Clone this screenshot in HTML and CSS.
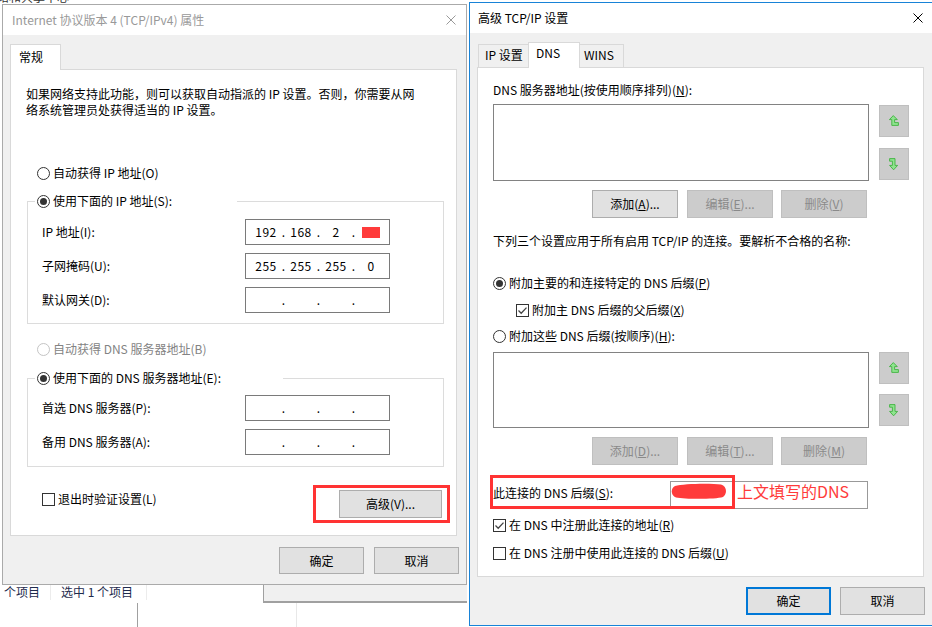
FILE: index.html
```html
<!DOCTYPE html>
<html lang="zh-CN">
<head>
<meta charset="utf-8">
<title>TCP/IPv4 属性</title>
<link rel="stylesheet" href="styles.css">
</head>
<body>
<div class="explorer">
  <div class="explorer-top"><span class="crumb">络和共享中心</span></div>
  <div class="statusbar">
    <div class="status-left">
      <span class="status-item s1">个项目</span>
      <span class="status-item s2">选中 1 个项目</span>
    </div>
    <div class="status-gray"></div>
  </div>
  <div class="explorer-bottom">
    <div class="col c1"></div>
    <div class="col c2"></div>
  </div>
</div>

<section class="win win-left">
  <header class="titlebar inactive">
    <span class="title">Internet 协议版本 4 (TCP/IPv4) 属性</span>
    <svg class="close" width="10" height="10" viewBox="0 0 10 10"><path d="M0.5 0.5L9.5 9.5M9.5 0.5L0.5 9.5"/></svg>
  </header>
  <nav class="tabs tabs-left"><div class="tab selected t-general">常规</div></nav>
  <div class="panel panel-left">
    <p class="intro">如果网络支持此功能，则可以获取自动指派的 IP 设置。否则，你需要从网<br>络系统管理员处获得适当的 IP 设置。</p>
    <div class="radio r-auto-ip"><span class="circle"></span>自动获得 IP 地址(O)</div>
    <div class="group g-ip">
      <div class="legend lg-ip"><div class="radio"><span class="circle on"></span>使用下面的 IP 地址(S):</div></div>
      <div class="field-row first">
        <span class="field-label">IP 地址(I):</span>
        <div class="ipbox"><span class="seg">192</span><span class="dot">.</span><span class="seg">168</span><span class="dot">.</span><span class="seg">2</span><span class="dot">.</span><span class="seg"><span class="redact"></span></span></div>
      </div>
      <div class="field-row">
        <span class="field-label">子网掩码(U):</span>
        <div class="ipbox"><span class="seg">255</span><span class="dot">.</span><span class="seg">255</span><span class="dot">.</span><span class="seg">255</span><span class="dot">.</span><span class="seg">0</span></div>
      </div>
      <div class="field-row">
        <span class="field-label">默认网关(D):</span>
        <div class="ipbox"><span class="seg"></span><span class="dot">.</span><span class="seg"></span><span class="dot">.</span><span class="seg"></span><span class="dot">.</span><span class="seg"></span></div>
      </div>
    </div>
    <div class="radio disabled r-auto-dns"><span class="circle"></span>自动获得 DNS 服务器地址(B)</div>
    <div class="group g-dns">
      <div class="legend lg-dns"><div class="radio"><span class="circle on"></span>使用下面的 DNS 服务器地址(E):</div></div>
      <div class="field-row first">
        <span class="field-label">首选 DNS 服务器(P):</span>
        <div class="ipbox"><span class="seg"></span><span class="dot">.</span><span class="seg"></span><span class="dot">.</span><span class="seg"></span><span class="dot">.</span><span class="seg"></span></div>
      </div>
      <div class="field-row">
        <span class="field-label">备用 DNS 服务器(A):</span>
        <div class="ipbox"><span class="seg"></span><span class="dot">.</span><span class="seg"></span><span class="dot">.</span><span class="seg"></span><span class="dot">.</span><span class="seg"></span></div>
      </div>
    </div>
    <div class="left-bottom">
      <div class="check cb-verify"><span class="box"></span>退出时验证设置(L)</div>
      <div class="hl hl-adv"><div class="btn btn-adv">高级(V)...</div></div>
    </div>
  </div>
  <div class="dialog-buttons db-left">
    <div class="btn">确定</div>
    <div class="btn">取消</div>
  </div>
</section>

<section class="win win-right">
  <header class="titlebar">
    <span class="title">高级 TCP/IP 设置</span>
    <svg class="close" width="10" height="10" viewBox="0 0 10 10"><path d="M0.5 0.5L9.5 9.5M9.5 0.5L0.5 9.5"/></svg>
  </header>
  <nav class="tabs tabs-right">
    <div class="tab t-ip">IP 设置</div>
    <div class="tab selected t-dns">DNS</div>
    <div class="tab t-wins">WINS</div>
  </nav>
  <div class="panel panel-right">
    <div class="lbl-servers">DNS 服务器地址(按使用顺序排列)(<u>N</u>):</div>
    <div class="list-row lr1">
      <div class="listbox lb1"></div>
      <div class="arrows a1">
        <div class="arrow-btn up"><svg width="10" height="12" viewBox="0 0 10 12"><path d="M4.3 0.6L8.3 4.6H5.6V7.6H9.4V10.4H2.8V4.6H0.4Z" fill="#8fe38f" stroke="#3fb23f" stroke-width="0.9"/></svg></div>
        <div class="arrow-btn down"><svg width="10" height="13" viewBox="0 0 10 13"><path d="M0.6 0.6H6V7.4H8.6L4.6 11.8L0.6 7.4H3.4V3.2H0.6Z" fill="#8fe38f" stroke="#3fb23f" stroke-width="0.9"/></svg></div>
      </div>
    </div>
    <div class="btn-row">
      <div class="btn">添加(<u>A</u>)...</div>
      <div class="btn disabled b2">编辑(<u>E</u>)...</div>
      <div class="btn disabled b3">删除(<u>V</u>)</div>
    </div>
    <p class="info">下列三个设置应用于所有启用 TCP/IP 的连接。要解析不合格的名称:</p>
    <div class="radio rr1"><span class="circle on"></span>附加主要的和连接特定的 DNS 后缀(<u>P</u>)</div>
    <div class="check rc1"><span class="box"><svg width="11" height="11" viewBox="0 0 11 11"><path d="M1.5 5.5L4.2 8.2L9.5 2.6"/></svg></span>附加主 DNS 后缀的父后缀(<u>X</u>)</div>
    <div class="radio rr2"><span class="circle"></span>附加这些 DNS 后缀(按顺序)(<u>H</u>):</div>
    <div class="list-row lr2">
      <div class="listbox lb2"></div>
      <div class="arrows a2">
        <div class="arrow-btn up"><svg width="10" height="12" viewBox="0 0 10 12"><path d="M4.3 0.6L8.3 4.6H5.6V7.6H9.4V10.4H2.8V4.6H0.4Z" fill="#8fe38f" stroke="#3fb23f" stroke-width="0.9"/></svg></div>
        <div class="arrow-btn down"><svg width="10" height="13" viewBox="0 0 10 13"><path d="M0.6 0.6H6V7.4H8.6L4.6 11.8L0.6 7.4H3.4V3.2H0.6Z" fill="#8fe38f" stroke="#3fb23f" stroke-width="0.9"/></svg></div>
      </div>
    </div>
    <div class="btn-row">
      <div class="btn disabled">添加(<u>D</u>)...</div>
      <div class="btn disabled b2">编辑(<u>T</u>)...</div>
      <div class="btn disabled b3">删除(<u>M</u>)</div>
    </div>
    <div class="suffix-row">
      <span class="suffix-label">此连接的 DNS 后缀(<u>S</u>):</span>
      <div class="suffix-box">
        <svg class="blob" width="56" height="16" viewBox="0 0 56 16"><path d="M4 3C12 0.5 40 0 50 1.5C56 3 56.5 11 52 14C44 16.5 14 16.3 5 14.5C-0.5 12.5 -0.5 5 4 3Z"/></svg>
        <span class="note">上文填写的DNS</span>
      </div>
      <div class="hl hl-suffix"></div>
    </div>
    <div class="check rc2"><span class="box"><svg width="11" height="11" viewBox="0 0 11 11"><path d="M1.5 5.5L4.2 8.2L9.5 2.6"/></svg></span>在 DNS 中注册此连接的地址(<u>R</u>)</div>
    <div class="check rc3"><span class="box"></span>在 DNS 注册中使用此连接的 DNS 后缀(<u>U</u>)</div>
  </div>
  <div class="dialog-buttons db-right">
    <div class="btn default">确定</div>
    <div class="btn">取消</div>
  </div>
</section>
</body>
</html>
```

FILE: styles.css
```css
* { box-sizing: border-box; margin: 0; padding: 0; }
html, body { width: 932px; height: 627px; overflow: hidden; }
body {
  position: relative;
  background: #fff;
  font-family: "Noto Sans CJK SC", "Noto Sans", sans-serif;
  font-size: 12px;
  line-height: 16px;
  color: #000;
}
u { text-decoration: underline; text-underline-offset: 1px; }

/* background explorer window */
.explorer { display: flex; flex-direction: column; width: 932px; height: 627px; }
.explorer-top { height: 585px; overflow: hidden; }
.crumb { display: block; margin: -11px 0 0 -3px; color: #333; }
.statusbar { display: flex; height: 18px; }
.status-left { display: flex; width: 263px; }
.status-item { height: 15px; line-height: 13px; color: #1e2b4d; border-right: 1px solid #ececec; white-space: nowrap; }
.s1 { width: 51px; padding-left: 4px; }
.s2 { width: 96px; padding-left: 10px; }
.status-gray { width: 204px; background: #f0f0f0; border-left: 1px solid #a0a0a0; border-bottom: 2px solid #a0a0a0; }
.explorer-bottom { display: flex; flex: 1; }
.c1 { width: 138px; border-right: 1px solid #a0a0a0; }
.c2 { width: 159px; border-right: 1px solid #e8e8e8; }

/* dialog windows */
.win { position: absolute; display: flex; flex-direction: column; background: #f0f0f0; }
.win-left { left: 2px; top: 4px; width: 465px; height: 581px; border: 1px solid #aaa; }
.win-right { left: 469px; top: 2px; width: 464px; height: 624px; border: 1px solid #1883d7; }

.titlebar { flex: none; display: flex; align-items: center; height: 30px; padding-left: 9px; background: #fff; white-space: nowrap; }
.win-right .titlebar { padding-left: 8px; }
.titlebar.inactive { color: #999; }
.close { margin-left: auto; margin-right: 10px; fill: none; stroke: #000; stroke-width: 1; }
.inactive .close { stroke: #999; }
.win-right .close { margin-right: 9px; }

/* tabs */
.tabs { flex: none; display: flex; align-items: flex-end; height: 25px; margin-top: 9px; }
.tabs-left { margin-left: 7px; }
.tabs-right { margin-left: 8px; }
.tab { height: 23px; padding-top: 2px; border: 1px solid #d9d9d9; border-bottom: none; background: #f0f0f0; white-space: nowrap; }
.tab.selected { position: relative; z-index: 1; height: 26px; margin-bottom: -1px; background: #fff; }
.t-general { width: 51px; padding-left: 8px; padding-top: 4px; }
.t-ip { width: 51px; padding-left: 6px; }
.t-dns { width: 52px; margin-left: -1px; padding-left: 7px; }
.t-wins { width: 45px; margin-left: -1px; padding-left: 4px; }

.panel { flex: none; position: relative; width: 447px; margin-left: 7px; background: #fff; border: 1px solid #d9d9d9; }
.panel-left { height: 467px; padding: 16px 0 0 15px; }
.panel-right { height: 510px; padding: 14px 0 0 15px; }

/* radios & checkboxes */
.radio, .check { display: flex; align-items: center; height: 16px; white-space: nowrap; }
.circle {
  flex: none; display: flex; align-items: center; justify-content: center;
  width: 13px; height: 13px; margin-right: 3px;
  border: 1px solid #333; border-radius: 50%; background: #fff;
}
.circle.on::after { content: ""; width: 7px; height: 7px; border-radius: 50%; background: #333; }
.radio.disabled { color: #838383; }
.radio.disabled .circle { border-color: #c4c4c4; }
.box { flex: none; display: flex; width: 13px; height: 13px; margin-right: 3px; border: 1px solid #333; background: #fff; }
.box svg { fill: none; stroke: #444; stroke-width: 1.3; }

/* left panel content */
.intro { white-space: nowrap; }
.r-auto-ip { margin: 47px 0 0 11px; }
.group { width: 417px; margin-left: 1px; border: 1px solid #dcdcdc; padding: 0 0 10px 14px; }
.g-ip { margin-top: 20px; }
.g-dns { margin-top: 21px; padding-bottom: 11px; }
.legend { margin: -9px 0 0 -7px; padding-left: 2px; background: #fff; }
.lg-ip { width: 202px; }
.lg-dns { width: 248px; }
.field-row { display: flex; align-items: center; height: 26px; margin-top: 8px; }
.field-row.first { margin-top: 10px; }
.g-dns .field-row.first { margin-top: 9px; }
.field-label { width: 203px; white-space: nowrap; }
.ipbox { display: flex; align-items: center; width: 145px; height: 26px; padding-left: 6px; border: 1px solid #7a7a7a; background: #fff; }
.seg { display: flex; align-items: center; justify-content: center; width: 28px; height: 100%; letter-spacing: 0.5px; }
.dot { width: 7px; text-align: center; }
.redact { width: 18px; height: 11px; background: #ff3b3b; }
.r-auto-dns { margin: 17px 0 0 11px; }
.left-bottom { display: flex; justify-content: space-between; align-items: flex-start; margin-top: 18px; padding-right: 6px; }
.cb-verify { margin: 6px 0 0 16px; }
.hl { border: 3px solid #f33; }
.hl-adv { padding: 2px 5px 2px 23px; }
.btn-adv { width: 103px; height: 28px; }

/* buttons */
.btn {
  display: flex; align-items: center; justify-content: center;
  border: 1px solid #adadad; background: #e1e1e1; white-space: nowrap;
}
.btn.disabled { background: #cccccc; border-color: #bfbfbf; color: #8a8a8a; }
.btn.default { border: 2px solid #0078d7; }
.dialog-buttons { flex: none; display: flex; justify-content: flex-end; padding-right: 7px; }
.db-left { margin-top: 11px; gap: 10px; }
.db-left .btn { width: 85px; height: 27px; }
.db-right { margin-top: 10px; gap: 9px; }
.db-right .btn { width: 85px; height: 28px; }

/* right panel content */
.lbl-servers { white-space: nowrap; }
.list-row { display: flex; align-items: flex-start; }
.lr1 { margin-top: 6px; }
.lr2 { margin-top: 8px; }
.listbox { width: 376px; background: #fff; border: 1px solid #828282; }
.lb1 { height: 77px; }
.lb2 { height: 76px; }
.arrows { display: flex; flex-direction: column; margin-left: 10px; }
.arrow-btn { display: flex; align-items: center; justify-content: center; width: 30px; height: 32px; background: #cccccc; border: 1px solid #bfbfbf; }
.a1 .up { margin-top: 1px; }
.a1 .down { margin-top: 11px; }
.a2 .down { margin-top: 10px; }
.btn-row { display: flex; margin-top: 9px; padding-left: 99px; }
.btn-row .btn { width: 86px; height: 28px; }
.btn-row .b2 { margin-left: 9px; }
.btn-row .b3 { margin-left: 8px; }
.info { margin-top: 15px; white-space: nowrap; }
.rr1 { margin-top: 26px; }
.rc1 { margin: 11px 0 0 23px; }
.rr2 { margin-top: 10px; }
.suffix-row { position: relative; display: flex; align-items: flex-start; margin-top: 16px; }
.suffix-label { width: 177px; margin-top: 4px; white-space: nowrap; }
.suffix-box { display: flex; align-items: flex-start; width: 198px; height: 28px; border: 1px solid #999; background: #fff; }
.blob { flex: none; margin-top: 1px; fill: #ff3b3b; }
.note { margin-left: 10px; color: #ff3b3b; font-size: 16px; line-height: 18px; white-space: nowrap; }
.hl-suffix { position: absolute; left: -3px; top: -6px; width: 245px; height: 34px; }
.rc2 { margin-top: 8px; }
.rc3 { margin-top: 12px; }
```
